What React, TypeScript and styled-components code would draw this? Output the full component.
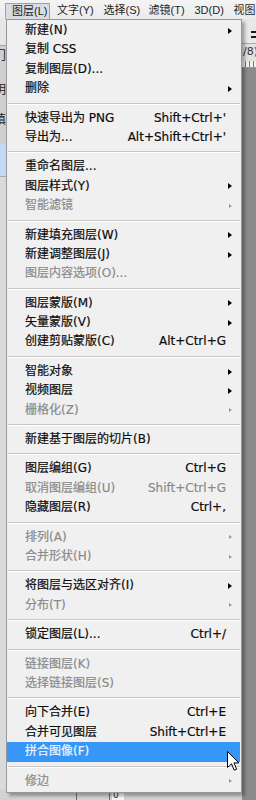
import React from 'react'
import styled, { createGlobalStyle, css } from 'styled-components'

const GlobalStyle = createGlobalStyle`
  body {
    margin: 0;
    background: #d6d6d6;
  }
`

type Entry = {
  label: string
  shortcut?: string
  sub?: boolean
  disabled?: boolean
  active?: boolean
}

const groups: Entry[][] = [
  [
    { label: '新建(N)', sub: true },
    { label: '复制 CSS' },
    { label: '复制图层(D)...' },
    { label: '删除', sub: true },
  ],
  [
    { label: '快速导出为 PNG', shortcut: "Shift+Ctrl+'" },
    { label: '导出为...', shortcut: "Alt+Shift+Ctrl+'" },
  ],
  [
    { label: '重命名图层...' },
    { label: '图层样式(Y)', sub: true },
    { label: '智能滤镜', sub: true, disabled: true },
  ],
  [
    { label: '新建填充图层(W)', sub: true },
    { label: '新建调整图层(J)', sub: true },
    { label: '图层内容选项(O)...', disabled: true },
  ],
  [
    { label: '图层蒙版(M)', sub: true },
    { label: '矢量蒙版(V)', sub: true },
    { label: '创建剪贴蒙版(C)', shortcut: 'Alt+Ctrl+G' },
  ],
  [
    { label: '智能对象', sub: true },
    { label: '视频图层', sub: true },
    { label: '栅格化(Z)', sub: true, disabled: true },
  ],
  [{ label: '新建基于图层的切片(B)' }],
  [
    { label: '图层编组(G)', shortcut: 'Ctrl+G' },
    { label: '取消图层编组(U)', shortcut: 'Shift+Ctrl+G', disabled: true },
    { label: '隐藏图层(R)', shortcut: 'Ctrl+,' },
  ],
  [
    { label: '排列(A)', sub: true, disabled: true },
    { label: '合并形状(H)', sub: true, disabled: true },
  ],
  [
    { label: '将图层与选区对齐(I)', sub: true },
    { label: '分布(T)', sub: true, disabled: true },
  ],
  [{ label: '锁定图层(L)...', shortcut: 'Ctrl+/' }],
  [
    { label: '链接图层(K)', disabled: true },
    { label: '选择链接图层(S)', disabled: true },
  ],
  [
    { label: '向下合并(E)', shortcut: 'Ctrl+E' },
    { label: '合并可见图层', shortcut: 'Shift+Ctrl+E' },
    { label: '拼合图像(F)', active: true },
  ],
  [{ label: '修边', sub: true, disabled: true }],
]

const titles = [
  { label: '图层(L)', w: 45, open: true },
  { label: '文字(Y)', w: 46.5 },
  { label: '选择(S)', w: 45 },
  { label: '滤镜(T)', w: 46 },
  { label: '3D(D)', w: 39 },
  { label: '视图(V)', w: 50 },
]

function App() {
  return (
    <>
      <GlobalStyle />
      <Screen>
        <MenuBar>
          {titles.map((t) => (
            <MenuTitle key={t.label} $w={t.w} $open={!!t.open}>
              {t.label}
            </MenuTitle>
          ))}
        </MenuBar>

        <Workspace>
          <SidePanel>
            <OptionsStrip />
            <PanelBlock $h={98}>
              <FragLine $top={4}>门</FragLine>
              <FragLine $top={22}>明</FragLine>
              <FragLine $top={18}>填</FragLine>
            </PanelBlock>
            <SelectedLayer />
            <PanelRest />
            <PanelFooter>
              <FooterCell $w={77} />
              <FooterCell $w={33} />
              <FooterNum>0</FooterNum>
            </PanelFooter>
          </SidePanel>

          <Canvas>
            <CanvasOptions>
              <IconBars>
                <span />
                <span />
              </IconBars>
            </CanvasOptions>
            <DocTab>/8)</DocTab>
            <Ruler />
            <CanvasArea />
          </Canvas>
        </Workspace>

        <Menu>
          {groups.map((g, gi) => (
            <React.Fragment key={gi}>
              {gi > 0 && <Separator />}
              {g.map((item) => (
                <Row
                  key={item.label}
                  $disabled={!!item.disabled}
                  $active={!!item.active}
                >
                  <span>{item.label}</span>
                  <Shortcut>{item.shortcut}</Shortcut>
                  <ArrowCell>
                    {item.sub && <Arrow $disabled={!!item.disabled} />}
                  </ArrowCell>
                </Row>
              ))}
            </React.Fragment>
          ))}
        </Menu>

        <Cursor width="13" height="21" viewBox="0 0 13 21">
          <path
            d="M0.5 0.5 L0.5 16.5 L4.5 12.8 L7.2 19.2 L9.6 18.2 L7 11.9 L12 11.9 Z"
            fill="#ffffff"
            stroke="#000000"
            strokeWidth="1"
            strokeLinejoin="miter"
          />
        </Cursor>
      </Screen>
    </>
  )
}

const uiFont = `"DejaVu Sans", "Noto Sans CJK SC", sans-serif`

const Screen = styled.div`
  position: relative;
  width: 256px;
  height: 800px;
  overflow: hidden;
  display: flex;
  flex-direction: column;
  background: #d6d6d6;
  font-family: ${uiFont};
`

const MenuBar = styled.div`
  height: 19px;
  flex: 0 0 19px;
  display: flex;
  align-items: flex-end;
  padding-left: 5px;
  background: linear-gradient(#f4f4f4, #ebebeb);
  font-family: "Liberation Sans", "Noto Sans CJK SC", sans-serif;
  font-size: 11px;
  color: #1e1e1e;
  white-space: nowrap;
`

const MenuTitle = styled.div<{ $w: number; $open: boolean }>`
  flex: 0 0 ${(p) => p.$w}px;
  box-sizing: border-box;
  height: 16px;
  line-height: 15px;
  padding-left: 7px;
  ${(p) =>
    p.$open &&
    css`
      background: #d8dde5;
      border: 1px solid #98a2b3;
      border-bottom: none;
      padding-left: 6px;
    `}
`

const Workspace = styled.div`
  flex: 1;
  display: flex;
  min-height: 0;
`

const SidePanel = styled.div`
  flex: 0 0 242px;
  display: flex;
  flex-direction: column;
  background: #d8d8d8;
  overflow: hidden;
`

const OptionsStrip = styled.div`
  height: 26px;
  background: #e6e6e6;
  border-bottom: 1px solid #a4a4a4;
`

const PanelBlock = styled.div<{ $h: number }>`
  height: ${(p) => p.$h}px;
  background: #cfcfcf;
  display: flex;
  flex-direction: column;
  font-size: 12px;
  color: #222;
`

const FragLine = styled.div<{ $top: number }>`
  margin-top: ${(p) => p.$top}px;
  margin-left: -6px;
  line-height: 12px;
`

const SelectedLayer = styled.div`
  height: 32px;
  background: #c3d8f3;
  border-bottom: 1px solid #a8a8a8;
`

const PanelRest = styled.div`
  flex: 1;
  background: #dadada;
`

const PanelFooter = styled.div`
  height: 10px;
  display: flex;
  background: #d2d2d2;
  font-size: 9px;
`

const FooterCell = styled.div<{ $w: number }>`
  width: ${(p) => p.$w}px;
  box-sizing: border-box;
  border-right: 1px solid #6a6a6a;
`

const FooterNum = styled.div`
  margin-left: 2px;
  width: 11px;
  background: #f6f6f6;
  line-height: 10px;
  padding-left: 1px;
  color: #222;
`

const Canvas = styled.div`
  flex: 1;
  display: flex;
  flex-direction: column;
  background: #8b8b8b;
`

const CanvasOptions = styled.div`
  height: 24px;
  background: #e8e8e8;
  border-bottom: 1px solid #a8a8a8;
  display: flex;
  align-items: center;
  justify-content: flex-end;
`

const IconBars = styled.div`
  display: flex;
  flex-direction: column;
  gap: 3px;
  margin-top: 6px;

  span {
    display: block;
    width: 7px;
    height: 2px;
    background: #1a1a1a;
  }
`

const DocTab = styled.div`
  height: 17px;
  background: #e2e2e2;
  font-size: 11px;
  line-height: 15px;
  color: #333;
  white-space: nowrap;
  padding-left: 1px;
`

const Ruler = styled.div`
  height: 6px;
  background: repeating-linear-gradient(
    90deg,
    #f2f2f2 0,
    #f2f2f2 3px,
    #777 3px,
    #777 4px
  );
  border-bottom: 1px solid #9a9a9a;
`

const CanvasArea = styled.div`
  flex: 1;
  background: #8b8b8b;
`

const Menu = styled.div`
  position: absolute;
  left: 6px;
  top: 19px;
  width: 236px;
  box-sizing: border-box;
  padding: 1px 0 1px 0;
  background: #f0f0f0;
  border: 1px solid #979797;
  box-shadow: 3px 3px 3px rgba(0, 0, 0, 0.3);
  font-family: ${uiFont};
  font-size: 12px;
  white-space: nowrap;
`

const Row = styled.div<{ $disabled: boolean; $active: boolean }>`
  display: grid;
  grid-template-columns: 1fr auto 14px;
  align-items: center;
  height: 19.4px;
  line-height: 19.4px;
  padding-left: 18px;
  margin-right: 1px;
  color: ${(p) => (p.$disabled ? '#8a8a8a' : '#0c0c0c')};
  -webkit-text-stroke: 0.2px currentColor;
  ${(p) =>
    p.$active &&
    css`
      background: #3797f8;
      color: #eef6ff;
    `}
`

const Shortcut = styled.span`
  text-align: right;
`

const ArrowCell = styled.span`
  display: flex;
  align-items: center;
  padding-left: 2px;
`

const Arrow = styled.span<{ $disabled: boolean }>`
  width: 0;
  height: 0;
  ${(p) =>
    p.$disabled
      ? css`
          border-top: 2.5px solid transparent;
          border-bottom: 2.5px solid transparent;
          border-left: 3px solid #9a9a9a;
          margin-left: 1px;
        `
      : css`
          border-top: 3.5px solid transparent;
          border-bottom: 3.5px solid transparent;
          border-left: 4px solid #000;
        `}
`

const Separator = styled.div`
  height: 10px;
  display: flex;
  align-items: center;
  margin: 0 1px;

  &::before {
    content: '';
    flex: 1;
    height: 0;
    border-top: 1px solid #c6c6c6;
    border-bottom: 1px solid #ffffff;
  }
`

const Cursor = styled.svg`
  position: absolute;
  left: 227px;
  top: 751px;
`

export default App
